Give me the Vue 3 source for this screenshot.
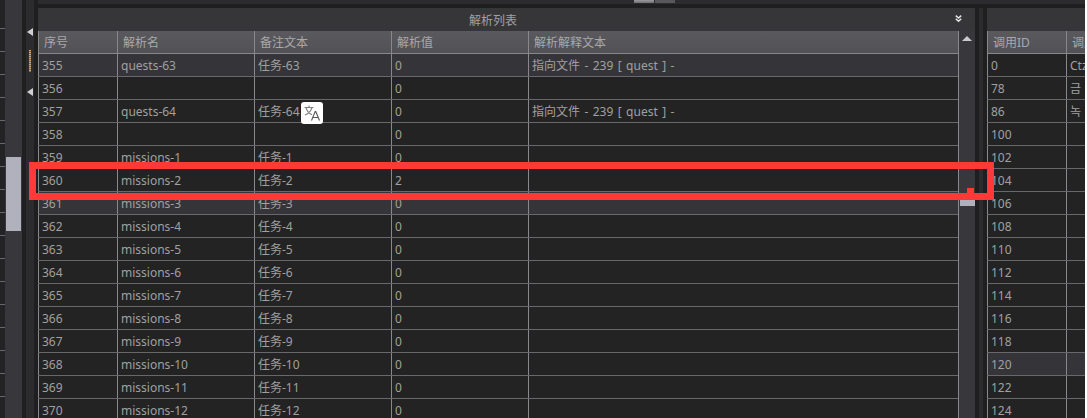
<script setup>
const names = { 355: ['quests-63', '任务-63'], 357: ['quests-64', '任务-64'] }
for (let i = 1; i <= 12; i++) names[358 + i] = [`missions-${i}`, `任务-${i}`]
const desc = '指向文件 - 239 [ quest ] -'
const rows = []
for (let n = 355; n <= 370; n++) {
  const [name, note] = names[n] || ['', '']
  rows.push({
    n,
    name,
    note,
    value: n === 360 ? '2' : '0',
    desc: n === 355 || n === 357 ? desc : '',
    alt: n === 355 || n === 361
  })
}
const heads = ['序号', '解析名', '备注文本', '解析值', '解析解释文本']
const ids = [0, 78, 86, 100, 102, 104, 106, 108, 110, 112, 114, 116, 118, 120, 122, 124]
const calls = { 0: 'Ctz', 78: '금', 86: '녹' }
const sideLines = Array.from({ length: 18 })
</script>

<template>
  <div class="app">
    <div class="side-list">
      <div v-for="(_, i) in sideLines" :key="i" class="side-line"></div>
    </div>
    <div class="vscroll side-scroll"><div class="side-thumb"></div></div>
    <div class="dark"></div>
    <div class="splitter">
      <span class="tri first"></span>
      <span class="dots"></span>
      <span class="tri second"></span>
    </div>
    <div class="dark"></div>

    <div class="content">
      <div class="top">
        <div class="top-light">
          <span class="tab tab-a"></span>
          <span class="tab tab-b"></span>
        </div>
      </div>
      <div class="panels">
        <section class="panel main">
          <div class="title main-title">
            <span>解析列表</span>
            <svg class="chev" width="7" height="7" viewBox="0 0 9 9" fill="none" stroke="#e4e4e4" stroke-width="1.9">
              <path d="M1 .8 4.500 4 8 .8M1 4.800 4.500 8 8 4.800" />
            </svg>
          </div>
          <div class="main-body">
            <div class="table">
              <div class="row head">
                <div v-for="h in heads" :key="h" class="cell">{{ h }}</div>
              </div>
              <div v-for="r in rows" :key="r.n" class="row" :class="{ alt: r.alt }">
                <div class="cell">{{ r.n }}</div>
                <div class="cell">{{ r.name }}</div>
                <div class="cell">{{ r.note }}</div>
                <div class="cell">{{ r.value }}</div>
                <div class="cell desc">{{ r.desc }}</div>
              </div>
            </div>
            <div class="main-scroll">
              <span class="up"></span>
              <span class="main-thumb"></span>
            </div>
          </div>
        </section>

        <div class="gutter"><i></i><b></b><i></i></div>

        <section class="panel right">
          <div class="title"></div>
          <div class="row rhead head">
            <div class="cell">调用ID</div>
            <div class="cell">调用名</div>
          </div>
          <div v-for="id in ids" :key="id" class="row rrow" :class="{ alt: id === 120 }">
            <div class="cell">{{ id }}</div>
            <div class="cell">{{ calls[id] || '' }}</div>
          </div>
        </section>
      </div>
    </div>

    <div class="edge"></div>

    <div class="translate">
      <svg width="18" height="18" viewBox="0 0 18 18" fill="none" stroke="#808080" stroke-width="1.1">
        <path d="M1.500 3.500h9M6 1.500v2M3 3.500c.8 3.400 3.200 6 6 7.200M9 3.500C8 7 5.400 9.600 2 11" />
        <path d="M8.500 16.500 12.200 7.500h.6l3.700 9M10 13.500h5.200" stroke="#555" />
      </svg>
    </div>
    <div class="redbox"><span class="bump"></span></div>
  </div>
</template>

<style scoped>
.app {
  position: relative;
  display: flex;
  width: 1087px;
  height: 418px;
  overflow: hidden;
  background: #fff;
  font-family: "Noto Sans", "Noto Sans CJK SC", sans-serif;
  font-size: 12px;
  color: #a0a0a0;
}
.side-list {
  width: 5px;
  flex: none;
  background: #232325;
  padding-top: 6px;
  box-sizing: border-box;
}
.side-line {
  height: 23px;
  box-sizing: border-box;
  border-bottom: 1px solid #68686c;
}
.vscroll {
  width: 17px;
  flex: none;
  background: #38383c;
}
.side-thumb {
  width: 15px;
  height: 74px;
  margin: 157px 0 0 1px;
  background: #b1b1bd;
}
.dark {
  width: 4px;
  flex: none;
  background: #1f1f20;
}
.splitter {
  width: 8px;
  flex: none;
  background: #2c2c2e;
  display: flex;
  flex-direction: column;
  align-items: center;
}
.tri {
  width: 0;
  height: 0;
  border-top: 4px solid transparent;
  border-bottom: 4px solid transparent;
  border-right: 6px solid #cfd0d4;
}
.tri.first { margin-top: 28px; }
.tri.second { margin-top: 16px; }
.dots {
  width: 2px;
  height: 22px;
  margin-top: 14px;
  margin-right: 1px;
  background: repeating-linear-gradient(to bottom, #c7a878 0 1px, #5d6f92 1px 2px);
}
.content {
  width: 1047px;
  flex: none;
  display: flex;
  flex-direction: column;
}
.top {
  height: 8px;
  flex: none;
  background: #1f1f20;
}
.top-light {
  height: 4px;
  background: #2c2c2e;
  display: flex;
  gap: 1px;
  padding-left: 596px;
}
.tab {
  width: 20px;
  height: 3px;
}
.tab-a { background: linear-gradient(to bottom, #9c9ca0, #6d6d72); }
.tab-b { background: #58585c; }
.panels {
  flex: 1;
  display: flex;
  min-height: 0;
}
.panel {
  display: flex;
  flex-direction: column;
  background: #232324;
  overflow: hidden;
}
.main { width: 937px; flex: none; }
.right { width: 98px; flex: none; }
.title {
  height: 23px;
  flex: none;
  background: #363639;
  display: flex;
  align-items: center;
  justify-content: center;
  position: relative;
  color: #a2a2a2;
}
.main-title { padding-right: 27px; }
.chev {
  position: absolute;
  right: 13px;
  top: 7px;
}
.main-body {
  display: flex;
  flex: 1;
  min-height: 0;
}
.table {
  width: 920px;
  flex: none;
}
.row {
  display: grid;
  grid-template-columns: 79px 137px 137px 137px 430px;
  height: 23px;
  box-sizing: border-box;
  border-bottom: 1px solid #68686c;
  background: #232324;
}
.row.alt { background: #353539; }
.row.head {
  background: linear-gradient(to bottom, #5a5a5e, #525256);
  border-bottom-color: #88888c;
  color: #a8a8ab;
}
.cell {
  box-sizing: border-box;
  border-left: 1px solid #88888c;
  padding: 0 3px;
  line-height: 24px;
  white-space: nowrap;
  overflow: hidden;
}
.desc { word-spacing: 1.3px; }
.head .cell { padding-left: 5px; }
.main-scroll {
  width: 17px;
  flex: none;
  box-sizing: border-box;
  border-left: 1px solid #88888c;
  background: #38383c;
  display: flex;
  flex-direction: column;
  align-items: center;
}
.up {
  width: 0;
  height: 0;
  margin-top: 5px;
  border-left: 5px solid transparent;
  border-right: 5px solid transparent;
  border-bottom: 5px solid #c9c9d2;
}
.main-thumb {
  width: 15px;
  height: 6px;
  margin-top: 159px;
  background: #b1b1bd;
}
.gutter {
  width: 12px;
  flex: none;
  display: flex;
}
.gutter i { width: 4px; background: #1f1f20; }
.gutter b { width: 4px; background: #2c2c2e; }
.rhead, .rrow { grid-template-columns: 79px 19px; }
.edge {
  flex: 1;
  background: #fff;
}
.translate {
  position: absolute;
  left: 301px;
  top: 102px;
  width: 22px;
  height: 22px;
  border-radius: 3px;
  background: #fff;
  display: flex;
  align-items: center;
  justify-content: center;
}
.redbox {
  position: absolute;
  left: 29px;
  top: 162px;
  width: 965px;
  height: 38px;
  box-sizing: border-box;
  border: 7px solid #ff3838;
}
.bump {
  position: absolute;
  left: 931px;
  top: 19px;
  width: 7px;
  height: 5px;
  background: #ff3838;
}
</style>

<style>
body { background: #fff; }
</style>
